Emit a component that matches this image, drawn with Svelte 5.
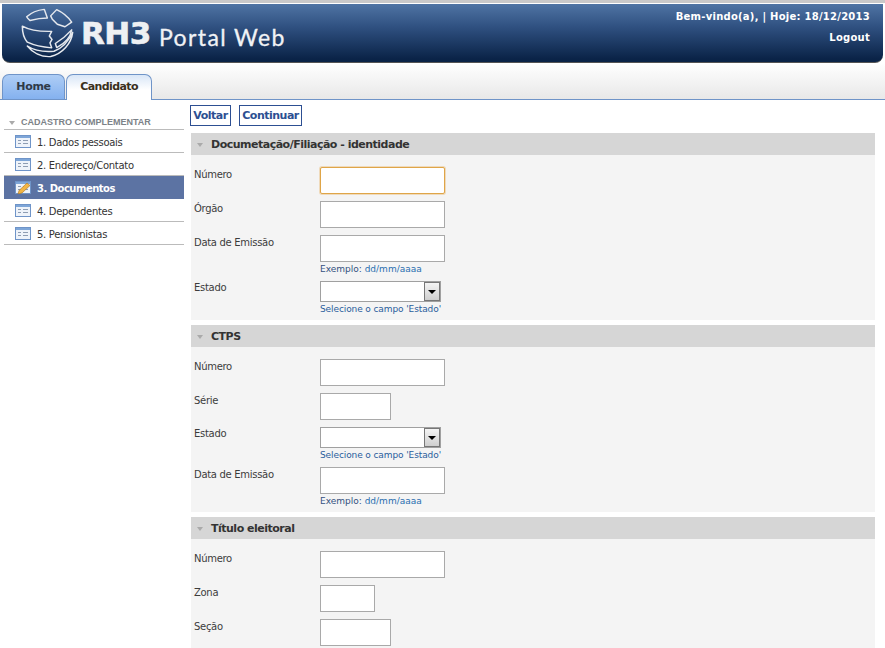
<script>
  const nav = [
    { label: '1. Dados pessoais' },
    { label: '2. Endereço/Contato' },
    { label: '3. Documentos', active: true },
    { label: '4. Dependentes' },
    { label: '5. Pensionistas' }
  ];
  const sections = [
    {
      title: 'Documetação/Filiação - identidade',
      fields: [
        { label: 'Número', focus: true },
        { label: 'Órgão' },
        { label: 'Data de Emissão', hint: 'date' },
        { label: 'Estado', select: true }
      ]
    },
    {
      title: 'CTPS',
      fields: [
        { label: 'Número' },
        { label: 'Série', size: 'm' },
        { label: 'Estado', select: true },
        { label: 'Data de Emissão', hint: 'date' }
      ]
    },
    {
      title: 'Título eleitoral',
      fields: [
        { label: 'Número' },
        { label: 'Zona', size: 's' },
        { label: 'Seção', size: 'm' }
      ]
    }
  ];
</script>

<div class="page">
  <header class="banner">
    <div class="brand">
      <svg class="globe" width="70" height="54" viewBox="0 0 210 174" preserveAspectRatio="none" fill="none" stroke="#e6e9ee" stroke-width="4.500" stroke-linejoin="round">
        <path d="M50 38 C64 24 84 16 103 14 L112 42 C92 42 74 46 60 50 C56 46 52 42 50 38 Z" />
        <path d="M122 35 L140 15 C158 24 174 38 185 55 L165 70 L142 62 L127 46 Z" />
        <path d="M37 68 C60 82 92 86 125 85 L118 100 L126 111 L120 122 L125 138 C96 136 72 130 52 120 C42 108 37 90 37 68 Z" />
        <path d="M185 80 C182 104 164 124 140 137 L136 124 C154 112 170 98 185 80 Z" />
        <path d="M52 132 C72 146 100 152 132 149 C156 140 176 116 188 88 C184 124 158 156 122 166 C94 168 68 154 52 132 Z" />
      </svg>
      <span class="rh">RH3</span>
      <span class="portal">Portal Web</span>
    </div>
    <div class="user">
      <div>Bem-vindo(a), | Hoje: 18/12/2013</div>
      <div>Logout</div>
    </div>
  </header>

  <nav class="tabs">
    <span class="tab">Home</span>
    <span class="tab current">Candidato</span>
  </nav>

  <div class="content">
    <aside class="side">
      <div class="side-title"><i class="caret light"></i>CADASTRO COMPLEMENTAR</div>
      {#each nav as item}
        <div class="nav-item" class:active={item.active}>
          <svg width="16" height="13" viewBox="0 0 16 13">
            <rect x=".5" y=".5" width="15" height="12" fill="#eef3fa" stroke="#6f94c8" />
            <rect x="1" y="1" width="14" height="2" fill="#7ea6d8" />
            <path d="M3 5.500h3M3 8.500h3M8 5.500h5M8 8.500h5" stroke="#8e9db3" fill="none" />
            {#if item.active}
              <path d="M3 13 L4 9.500 L12 2 L15 4.500 L7 12 Z" fill="#f2b544" stroke="#a8701c" stroke-width=".6" />
            {/if}
          </svg>
          <span>{item.label}</span>
        </div>
      {/each}
    </aside>

    <main class="main">
      <div class="actions">
        <button class="back">Voltar</button>
        <button class="next">Continuar</button>
      </div>
      {#each sections as s}
        <section>
          <h2><i class="caret"></i>{s.title}</h2>
          <div class="body">
            {#each s.fields as f}
              <div class="row" class:has-hint={f.hint} class:has-select={f.select}>
                <label for="">{f.label}</label>
                <div class="field">
                  {#if f.select}
                    <div class="select"><span class="arrow"></span></div>
                    <div class="hint sel">Selecione o campo 'Estado'</div>
                  {:else}
                    <div class="input {f.size || ''}" class:focus={f.focus}></div>
                    {#if f.hint}
                      <div class="hint">Exemplo: <em>dd/mm/aaaa</em></div>
                    {/if}
                  {/if}
                </div>
              </div>
            {/each}
          </div>
        </section>
      {/each}
    </main>
  </div>
</div>

<style>
  :global(body) {
    margin: 0;
    background: #fff;
    overflow: hidden;
  }
  .page {
    width: 885px;
    height: 648px;
    overflow: hidden;
    font-family: "DejaVu Sans", sans-serif;
    font-size: 10px;
    letter-spacing: -.3px;
    color: #333;
    border-top: 3px solid #c9c9c9;
    box-sizing: border-box;
  }
  .banner {
    margin: 1px 2px 0;
    height: 59px;
    box-sizing: border-box;
    background: linear-gradient(#4f74a4, #2f5080 40%, #0a2347 95%);
    border-radius: 0 0 8px 8px;
    border-bottom: 1px solid #555;
    display: flex;
    justify-content: space-between;
    color: #fff;
    letter-spacing: 0;
  }
  .brand {
    display: flex;
    align-items: center;
    padding-left: 8px;
  }
  .globe {
    align-self: flex-start;
    margin-top: 1px;
  }
  .rh {
    font-family: "DejaVu Sans", sans-serif;
    font-weight: 700;
    font-size: 31px;
    color: #eef0f3;
    -webkit-text-stroke: .6px #eef0f3;
    margin-left: 1px;
    letter-spacing: -.5px;
    width: 78px;
  }
  .portal {
    font-family: "Lato", sans-serif;
    font-size: 23px;
    letter-spacing: 1.4px;
    color: #f0f2f5;
    -webkit-text-stroke: .3px #f0f2f5;
    margin-top: 7px;
  }
  .user {
    padding: 2px 13px 0 0;
    text-align: right;
    font-weight: 700;
    font-size: 10px;
    letter-spacing: .25px;
    line-height: 21px;
  }
  .tabs {
    height: 37px;
    box-sizing: border-box;
    background: linear-gradient(#fff, #e8e8e8);
    border-bottom: 1px solid #6f94c8;
    padding: 11px 0 0 2px;
    display: flex;
    gap: 1px;
  }
  .tab {
    width: 63px;
    height: 25px;
    box-sizing: border-box;
    border: 1px solid #6f94c8;
    border-bottom: 0;
    border-radius: 7px 7px 0 0;
    background: linear-gradient(#aecdf5, #84b1ef);
    font-weight: 700;
    font-size: 11px;
    letter-spacing: -.3px;
    text-align: center;
    line-height: 24px;
    color: #2f3a48;
  }
  .tab.current {
    width: 86px;
    background: linear-gradient(#d9e6f7, #fff 60%);
    height: 26px;
    color: #3a3020;
    letter-spacing: -.6px;
  }
  .content {
    display: flex;
    padding-left: 4px;
  }
  .side {
    width: 180px;
    padding-top: 15px;
    margin-right: 7px;
    flex: none;
  }
  .side-title {
    height: 13px;
    line-height: 13px;
    font-family: "Liberation Sans", sans-serif;
    font-size: 9px;
    letter-spacing: 0;
    font-weight: 700;
    color: #7c8288;
    border-bottom: 1px solid #bbb;
    padding: 1px 0 0 4px;
    display: flex;
    align-items: center;
    gap: 6px;
  }
  .nav-item {
    height: 22px;
    border-bottom: 1px solid #bbb;
    display: flex;
    align-items: center;
    padding-left: 11px;
    gap: 6px;
    color: #333;
  }
  .nav-item span {
    padding-top: 3px;
  }
  .nav-item.active {
    background: #5c73a3;
    color: #fff;
    font-weight: 700;
    border-bottom-color: #5c73a3;
    letter-spacing: -.5px;
  }
  .caret {
    display: inline-block;
    width: 0;
    height: 0;
    border: 3.5px solid transparent;
    border-top: 4px solid #aaa;
    border-bottom: 0;
    flex: none;
    margin-right: 8px;
  }
  .caret.light {
    margin-right: 0;
    margin-left: 1px;
  }
  .main {
    width: 684px;
    flex: none;
  }
  .actions {
    display: flex;
    gap: 8px;
    padding: 5px 0 7px;
    margin-left: -1px;
  }
  button {
    height: 21px;
    padding: 0;
    border: 1px solid #2d4f92;
    background: #fff;
    font: 700 11px "DejaVu Sans", sans-serif;
    letter-spacing: -.5px;
    color: #2d4f92;
  }
  .back {
    width: 41px;
  }
  .next {
    width: 63px;
  }
  section {
    margin-bottom: 5px;
  }
  h2 {
    margin: 0;
    height: 22px;
    box-sizing: border-box;
    background: #d6d6d6;
    padding: 1px 0 0 6px;
    font-size: 11px;
    letter-spacing: -.5px;
    font-weight: 700;
    line-height: 21px;
    color: #333;
    display: flex;
    align-items: center;
  }
  .body {
    display: flow-root;
    background: #f4f4f4;
    padding: 12px 0 0 3px;
  }
  .row {
    display: grid;
    grid-template-columns: 126px 1fr;
    margin-bottom: 7px;
  }
  .row label {
    line-height: 14px;
    padding-top: 1px;
    color: #3c3c3c;
  }
  .row.has-select label {
    padding-top: 0;
  }
  .input {
    width: 125px;
    height: 27px;
    box-sizing: border-box;
    border: 1px solid #a9a9a9;
    background: #fff;
  }
  .input.m {
    width: 71px;
  }
  .input.s {
    width: 55px;
  }
  .input.focus {
    border-color: #dfa548;
    border-radius: 2px;
    box-shadow: 0 0 0 1px rgba(230, 170, 80, .35);
  }
  .select {
    width: 121px;
    height: 21px;
    box-sizing: border-box;
    border: 1px solid #a0a0a0;
    background: #fff;
    position: relative;
    margin-bottom: 1px;
  }
  .arrow {
    position: absolute;
    right: 0;
    top: 0;
    width: 16px;
    height: 19px;
    box-sizing: border-box;
    border: 1px solid #777;
    background: linear-gradient(#f4f4f4, #cfcfcf);
  }
  .arrow::after {
    content: "";
    position: absolute;
    left: 3px;
    top: 7px;
    border: 4px solid transparent;
    border-top: 4px solid #000;
    border-bottom: 0;
  }
  .hint {
    font-size: 9px;
    letter-spacing: 0;
    line-height: 12px;
    color: #33517f;
    margin-top: 1px;
  }
  .hint em {
    font-style: normal;
    color: #2a6fb0;
  }
  .hint.sel {
    color: #2a5d9c;
    margin-top: 0;
    letter-spacing: -.1px;
  }
  .row.has-hint,
  .row.has-select {
    margin-bottom: 6px;
  }
  .row.has-hint:last-child,
  .row.has-select:last-child {
    margin-bottom: 5px;
  }
</style>
